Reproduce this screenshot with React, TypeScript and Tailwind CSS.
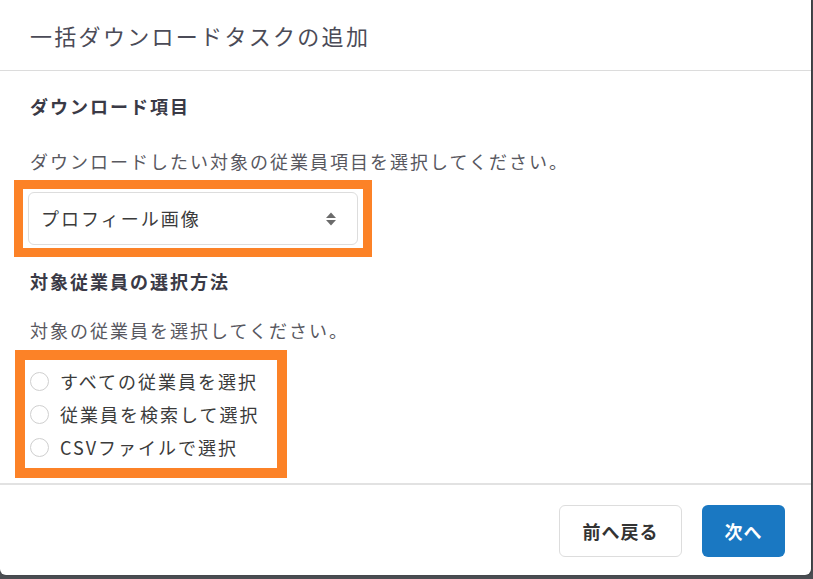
import { useState } from "react";

const FONT = "font-['Noto_Sans_CJK_JP','Noto_Sans',sans-serif]";

const options = ["すべての従業員を選択", "従業員を検索して選択", "CSVファイルで選択"];

function SortArrows() {
  return (
    <svg width="12" height="16" viewBox="0 0 12 16" aria-hidden="true">
      <path d="M6 1.5 L11 7 H1 Z" fill="#6b6b6b" />
      <path d="M6 14.5 L11 9 H1 Z" fill="#6b6b6b" />
    </svg>
  );
}

export default function App() {
  const [choice, setChoice] = useState<number | null>(null);

  return (
    <div className={`h-[579px] w-[813px] overflow-hidden bg-[#4a4d52] ${FONT}`}>
      <div className="flex h-[575px] w-[811px] flex-col rounded-b-md bg-white shadow-[1px_0_2px_rgba(0,0,0,0.25)]">
        <header className="flex h-[71px] items-center border-b border-[#dcdcdc] pl-[30px]">
          <h1 className="text-[22px] leading-none tracking-[2.3px] text-[#4b4b57]">
            一括ダウンロードタスクの追加
          </h1>
        </header>

        <main className="flex flex-1 flex-col pt-[23px]">
          <h2 className="pl-[30px] text-[18px] font-bold leading-6 tracking-[2px] text-[#3a3a46]">
            ダウンロード項目
          </h2>
          <p className="mt-[31px] pl-[30px] text-[18px] leading-6 tracking-[2px] text-[#58585f]">
            ダウンロードしたい対象の従業員項目を選択してください。
          </p>

          <div className="ml-[14px] mt-[7px] w-[358px] border-[9px] border-[#fc8227] px-[5px] py-[3px]">
            <button className="flex h-[53px] w-full items-center justify-between rounded-md border border-[#dddddd] pl-[12px] pr-[20px]">
              <span className="text-[18px] tracking-[2px] text-[#3b3b3b]">プロフィール画像</span>
              <SortArrows />
            </button>
          </div>

          <h2 className="mt-[12px] pl-[30px] text-[18px] font-bold leading-6 tracking-[2px] text-[#3a3a46]">
            対象従業員の選択方法
          </h2>
          <p className="mt-[25px] pl-[30px] text-[18px] leading-6 tracking-[2px] text-[#58585f]">
            対象の従業員を選択してください。
          </p>

          <div className="ml-[15px] mt-[8px] flex h-[128px] w-[272px] flex-col justify-center gap-[9px] border-[10px] border-[#fc8227] pl-[5px]">
            {options.map((label, i) => (
              <label key={label} className="flex h-6 cursor-pointer items-center gap-[11px]">
                <input
                  type="radio"
                  name="target"
                  checked={choice === i}
                  onChange={() => setChoice(i)}
                  className="sr-only"
                />
                <span className="flex h-[19px] w-[19px] items-center justify-center rounded-full border border-[#cfcfcf] bg-white">
                  {choice === i && <span className="h-[9px] w-[9px] rounded-full bg-[#1a78c2]" />}
                </span>
                <span className="text-[18px] tracking-[2px] text-[#3b3b3b]">{label}</span>
              </label>
            ))}
          </div>
        </main>

        <footer className="flex items-center justify-end gap-[20px] border-t-2 border-[#e2e2e2] pb-[18px] pr-[26px] pt-[20px]">
          <button className="h-[52px] w-[123px] rounded-md border border-[#dddddd] bg-white text-[18px] font-bold tracking-[1px] text-[#333]">
            前へ戻る
          </button>
          <button className="h-[52px] w-[83px] rounded-md bg-[#1a78c2] text-[18px] font-bold tracking-[1px] text-white">
            次へ
          </button>
        </footer>
      </div>
    </div>
  );
}
